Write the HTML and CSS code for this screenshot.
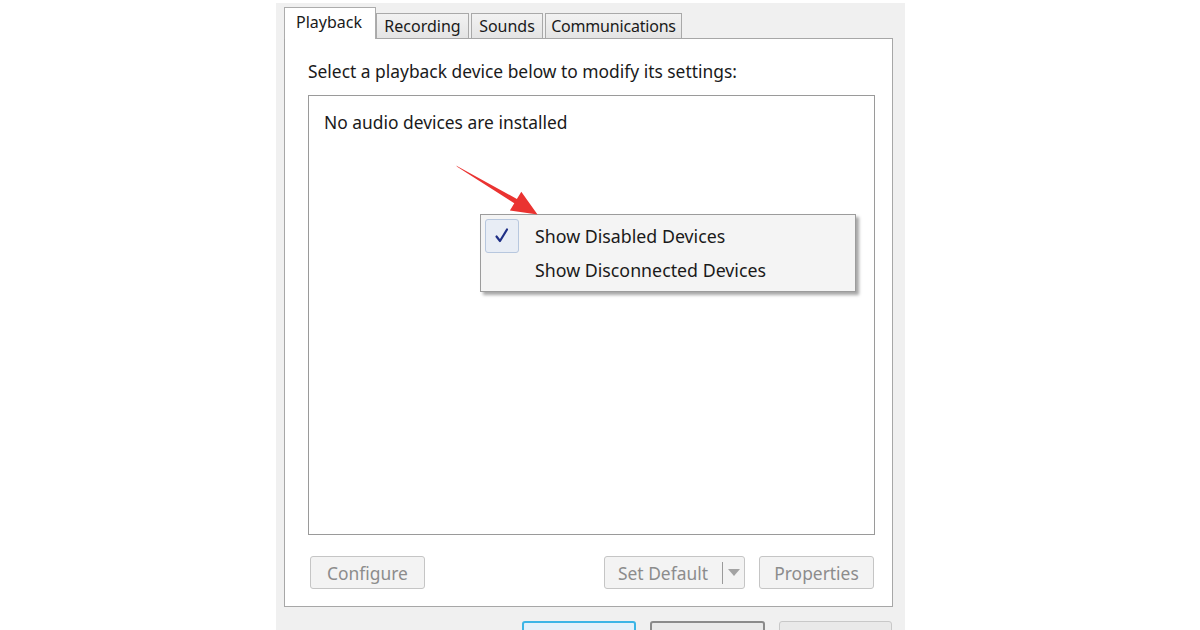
FILE: index.html
```html
<!DOCTYPE html>
<html>
<head>
<meta charset="utf-8">
<link rel="stylesheet" href="styles.css">
</head>
<body>
<div class="dialog">
  <div class="tabs">
    <div class="tab selected">Playback</div>
    <div class="tab w-rec">Recording</div>
    <div class="tab w-snd">Sounds</div>
    <div class="tab w-com">Communications</div>
  </div>
  <div class="panel">
    <div class="heading">Select a playback device below to modify its settings:</div>
    <div class="listbox">No audio devices are installed</div>
    <div class="btnrow">
      <div class="btn disabled w115">Configure</div>
      <div class="spacer"></div>
      <div class="btn disabled split">
        <span class="split-label">Set Default</span>
        <span class="split-div"></span>
        <span class="split-arrow"></span>
      </div>
      <div class="btn disabled w115">Properties</div>
    </div>
  </div>
  <div class="footer">
    <div class="btn fbtn ok"></div>
    <div class="btn fbtn cancel"></div>
    <div class="btn fbtn apply"></div>
  </div>
</div>

<div class="menu">
  <div class="item">
    <span class="check">
      <svg width="20" height="20" viewBox="0 0 20 20"><path d="M4.5 10.5 L8 15 L15 3.5" fill="none" stroke="#1f2f86" stroke-width="2.2" stroke-linecap="round" stroke-linejoin="round"/></svg>
    </span>
    <span class="label">Show Disabled Devices</span>
  </div>
  <div class="item">
    <span class="nocheck"></span>
    <span class="label">Show Disconnected Devices</span>
  </div>
</div>

<svg class="arrow" width="1200" height="630" viewBox="0 0 1200 630">
  <polygon points="456,165.5 457.5,167 514.3,203.2 509.9,210.5 537.5,214.5 521.3,191.7 516.9,199" fill="#ea3331"/>
</svg>
</body>
</html>
```

FILE: styles.css
```css
html, body {
  margin: 0;
  padding: 0;
  background: #ffffff;
  font-family: "Noto Sans", "Open Sans", sans-serif;
  font-size: 17.4px;
  color: #1a1a1a;
}

body {
  width: 1200px;
  height: 630px;
  overflow: hidden;
  position: relative;
}

.dialog {
  margin-left: 276px;
  margin-top: 3px;
  width: 629px;
  height: 627px;
  box-sizing: border-box;
  background: #f0f0f0;
  padding: 4px 13px 0 8px;
}

.tabs {
  display: flex;
  align-items: flex-end;
  height: 31px;
  position: relative;
  z-index: 2;
  font-size: 16px;
}

.tab {
  height: 25px;
  box-sizing: border-box;
  border: 1px solid #a9a9a9;
  border-bottom: none;
  background: linear-gradient(#f2f2f2, #e4e4e4);
  display: flex;
  align-items: center;
  justify-content: center;
  margin-right: 1px;
  line-height: 1;
  white-space: nowrap;
}

.tab.selected {
  height: 32px;
  width: 92px;
  margin-bottom: -1px;
  background: #ffffff;
  border-color: #acacac;
  justify-content: flex-start;
  padding-left: 11px;
  padding-bottom: 4px;
  margin-right: 0;
}

.w-rec { width: 93px; }
.w-snd { width: 72px; margin-left: 1px; }
.w-com { width: 137px; margin-left: 1px; letter-spacing: -0.2px; }

.panel {
  width: 609px;
  height: 569px;
  box-sizing: border-box;
  border: 1px solid #a7a7a7;
  background: #ffffff;
  padding: 21px 16px 0 23px;
  display: flex;
  flex-direction: column;
}

.heading {
  height: 22px;
  line-height: 22px;
  margin-bottom: 13px;
  white-space: nowrap;
}

.listbox {
  width: 567px;
  height: 440px;
  box-sizing: border-box;
  border: 1px solid #9a9a9a;
  padding: 15px 15px;
  line-height: 22px;
}

.btnrow {
  display: flex;
  margin-top: 21px;
  padding-left: 2px;
  height: 33px;
}

.spacer { flex: 1; }

.btn {
  box-sizing: border-box;
  height: 33px;
  border: 1px solid #c5c5c5;
  border-radius: 3px;
  background: #f3f3f3;
  display: flex;
  align-items: center;
  justify-content: center;
  white-space: nowrap;
}

.btn.disabled {
  color: #8c8c8c;
}

.w115 { width: 115px; }

.btnrow .btn:last-child {
  margin-left: 14px;
  margin-right: 2px;
}

.split {
  width: 141px;
  justify-content: flex-start;
  padding-left: 13px;
}

.split-label { width: 104px; }

.split-div {
  width: 1px;
  height: 22px;
  background: #9a9a9a;
}

.split-arrow {
  width: 0;
  height: 0;
  margin-left: 5px;
  border-left: 6px solid transparent;
  border-right: 6px solid transparent;
  border-top: 7px solid #a3a3a3;
}

.footer {
  display: flex;
  margin-top: 14px;
  padding-left: 238px;
  gap: 13px;
}

.fbtn {
  width: 116px;
  height: 33px;
  background: #e9e9e9;
}

.fbtn.ok {
  border: 2px solid #3bb5e6;
  background: #e3f1fa;
}

.fbtn.cancel {
  border: 2px solid #8a8a8a;
  margin-left: 1px;
}

.fbtn.apply {
  border: 1px solid #c8c8c8;
  width: 115px;
  margin-left: 1px;
}

.menu {
  position: absolute;
  left: 480px;
  top: 214px;
  width: 376px;
  height: 78px;
  box-sizing: border-box;
  border: 1px solid #9c9c9c;
  background: #f4f4f4;
  box-shadow: 3px 3px 3px rgba(0, 0, 0, 0.35);
  padding: 4px 0 0 4px;
  z-index: 5;
}

.item {
  display: flex;
  align-items: center;
  height: 34px;
}

.check, .nocheck {
  width: 34px;
  height: 34px;
  box-sizing: border-box;
  display: flex;
  align-items: center;
  justify-content: center;
  margin-right: 16px;
}

.check {
  border: 1px solid #b7c7de;
  border-radius: 3px;
  background: #e8edf5;
}

.label {
  line-height: 22px;
  font-size: 17.8px;
  white-space: nowrap;
}

.arrow {
  position: absolute;
  left: 0;
  top: 0;
  z-index: 6;
  pointer-events: none;
}
```
